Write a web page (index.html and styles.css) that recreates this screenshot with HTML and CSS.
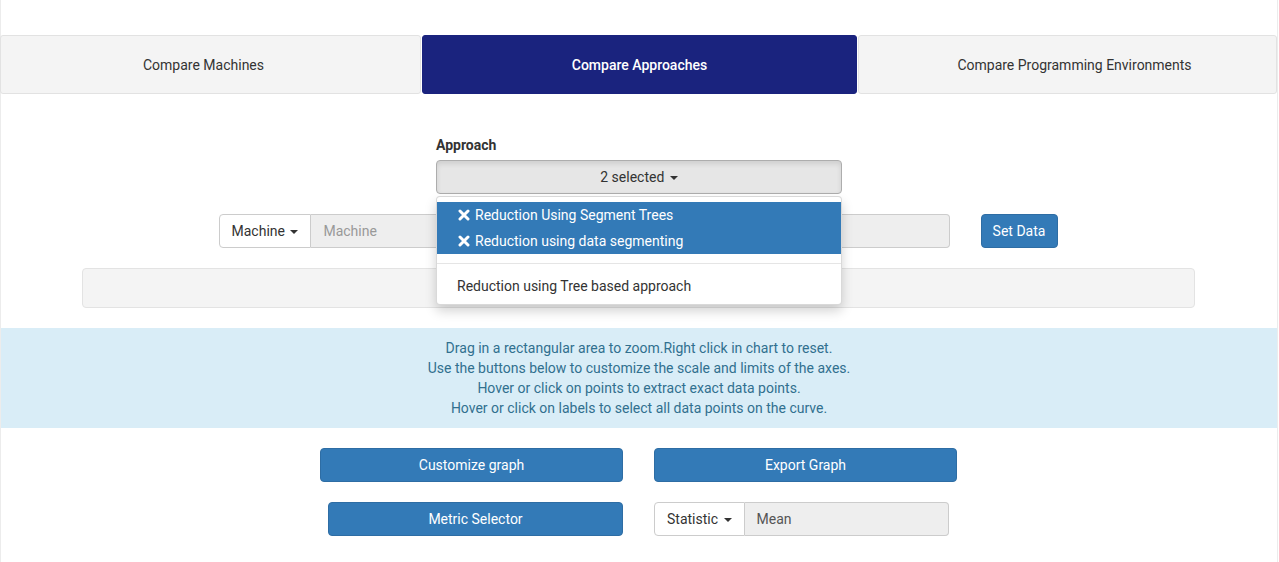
FILE: index.html
```html
<!DOCTYPE html>
<html lang="en">
<head>
<meta charset="utf-8">
<title>Compare Approaches</title>
<link rel="stylesheet" href="styles.css">
</head>
<body>
<div class="page">
  <nav class="tabs">
    <a class="tab first">Compare Machines</a>
    <a class="tab active">Compare Approaches</a>
    <a class="tab last">Compare Programming Environments</a>
  </nav>

  <section class="controls">
    <div class="approach">
      <label class="field-label">Approach</label>
      <div class="multiselect">
        <button class="ms-toggle">2 selected <span class="caret"></span></button>
        <ul class="ms-menu">
          <li class="ms-item selected"><svg class="x-icon" viewBox="0 0 12 12"><path d="M2 2 L10 10 M10 2 L2 10" stroke="#fff" stroke-width="3" stroke-linecap="round"/></svg>Reduction Using Segment Trees</li>
          <li class="ms-item selected"><svg class="x-icon" viewBox="0 0 12 12"><path d="M2 2 L10 10 M10 2 L2 10" stroke="#fff" stroke-width="3" stroke-linecap="round"/></svg>Reduction using data segmenting</li>
          <li class="ms-divider"></li>
          <li class="ms-item">Reduction using Tree based approach</li>
        </ul>
      </div>
    </div>

    <div class="machine-row">
      <div class="input-group wide">
        <button class="addon-btn">Machine <span class="caret dark"></span></button>
        <input class="addon-input" placeholder="Machine" disabled>
      </div>
      <button class="btn-primary small">Set Data</button>
    </div>

    <div class="well"></div>
  </section>

  <div class="info">
    <p>Drag in a rectangular area to zoom.Right click in chart to reset.</p>
    <p>Use the buttons below to customize the scale and limits of the axes.</p>
    <p>Hover or click on points to extract exact data points.</p>
    <p>Hover or click on labels to select all data points on the curve.</p>
  </div>

  <div class="btn-row first-row">
    <button class="btn-primary wide-btn">Customize graph</button>
    <button class="btn-primary wide-btn">Export Graph</button>
  </div>
  <div class="btn-row second">
    <button class="btn-primary mid-btn">Metric Selector</button>
    <div class="input-group stat">
      <button class="addon-btn">Statistic <span class="caret dark"></span></button>
      <input class="addon-input value" value="Mean" disabled>
    </div>
  </div>

  <h2 class="chart-title">Time taken by the approaches</h2>
</div>
</body>
</html>
```

FILE: styles.css
```css
* { box-sizing: border-box; }
html, body { margin: 0; padding: 0; }
body {
  font-family: Roboto, "Liberation Sans", Arial, sans-serif;
  font-size: 14px;
  line-height: 20px;
  color: #333;
  background: #fff;
  overflow: hidden;
  height: 562px;
}
.page {
  width: 1278px;
  padding-top: 35px;
  border-right: 1px solid #ececec;
  min-height: 562px;
  background: linear-gradient(#ececec, #ececec) left top / 1px 100% no-repeat;
}

/* tabs */
.tabs {
  display: grid;
  grid-template-columns: 421px 435px 1fr;
  column-gap: 1px;
  height: 59px;
}
.tab {
  display: flex;
  align-items: center;
  justify-content: center;
  background: #f4f4f4;
  border: 1px solid #e2e2e2;
  border-radius: 3px;
  color: #333;
  font-size: 14px;
}
.tab.first { padding-right: 14px; }
.tab.last { padding-left: 14px; }
.tab.active {
  background: #1a237e;
  border-color: #1a237e;
  color: #fff;
  font-weight: 500;
}

/* controls */
.controls {
  padding-top: 41px;
  padding-bottom: 20px;
  display: flex;
  flex-direction: column;
  align-items: center;
}
.approach {
  width: 406px;
  margin-left: 1px;
}
.field-label {
  display: block;
  font-weight: 700;
  margin-bottom: 5px;
  color: #333;
}
.multiselect { position: relative; }
.ms-toggle {
  width: 100%;
  height: 34px;
  background: #e6e6e6;
  border: 1px solid #adadad;
  border-radius: 4px;
  font: inherit;
  color: #333;
  box-shadow: inset 0 3px 5px rgba(0,0,0,0.1);
  padding: 0;
}
.caret {
  display: inline-block;
  width: 0; height: 0;
  margin-left: 2px;
  vertical-align: middle;
  border-top: 4px solid #333;
  border-left: 4px solid transparent;
  border-right: 4px solid transparent;
}
.ms-menu {
  position: absolute;
  top: 36px;
  left: 0;
  right: 0;
  margin: 0;
  padding: 5px 0;
  list-style: none;
  background: #fff;
  border: 1px solid rgba(0,0,0,0.15);
  border-radius: 4px;
  box-shadow: 0 6px 12px rgba(0,0,0,0.175);
  z-index: 10;
}
.ms-item {
  display: flex;
  align-items: center;
  padding: 3px 20px;
  line-height: 20px;
  color: #333;
  white-space: nowrap;
}
.ms-item.selected {
  background: #337ab7;
  color: #fff;
  padding-left: 21px;
}
.x-icon { width: 12px; height: 12px; margin-right: 5px; }
.ms-divider {
  height: 1px;
  margin: 9px 0;
  background: #e5e5e5;
}

.machine-row {
  margin-top: 20px;
  display: flex;
  gap: 31px;
  align-items: center;
  margin-right: 1px;
}
.input-group {
  display: flex;
  height: 34px;
}
.input-group.wide { width: 731px; }
.addon-btn {
  flex: none;
  height: 34px;
  padding: 0 12px;
  background: #fff;
  border: 1px solid #ccc;
  border-radius: 4px 0 0 4px;
  font: inherit;
  color: #333;
  white-space: nowrap;
}
.addon-input {
  flex: 1;
  min-width: 0;
  height: 34px;
  background: #eee;
  border: 1px solid #ccc;
  border-left: none;
  border-radius: 0 4px 4px 0;
  padding: 0 12px;
  font: inherit;
  color: #555;
}
.addon-input::placeholder { color: #999; }
.addon-input.value { color: #555; -webkit-text-fill-color: #555; opacity: 1; }

.btn-primary {
  height: 34px;
  background: #337ab7;
  border: 1px solid #2e6da4;
  border-radius: 4px;
  color: #fff;
  font: inherit;
  padding: 0 6px;
  white-space: nowrap;
}
.btn-primary.small { width: 77px; }

.well {
  margin-top: 20px;
  width: 1113px;
  height: 40px;
  background: #f4f4f4;
  border: 1px solid #e3e3e3;
  border-radius: 4px;
  margin-right: 1px;
}

/* info */
.info {
  background: #d9edf7;
  color: #31708f;
  text-align: center;
  padding: 10px 0;
  margin-left: 1px;
}
.info p { margin: 0; }

.btn-row {
  display: flex;
  justify-content: center;
  gap: 31px;
  padding-top: 20px;
}
.wide-btn { width: 303px; }
.mid-btn { width: 295px; }
.input-group.stat { width: 295px; }

.chart-title {
  margin: 0;
  padding: 21px 0 0 140px;
  font-size: 30px;
  line-height: 33px;
  font-weight: 500;
  color: #333;
  white-space: nowrap;
}
```
